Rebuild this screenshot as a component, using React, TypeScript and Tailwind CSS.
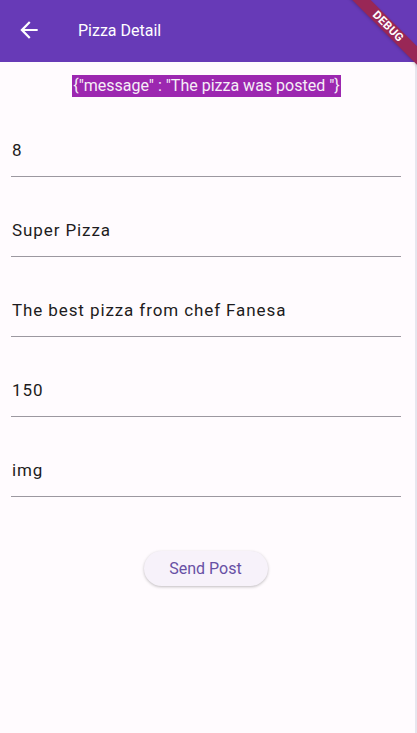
export default function App() {
  const fields = ["8", "Super Pizza", "The best pizza from chef Fanesa", "150", "img"];

  return (
    <div className="relative w-[417px] h-[733px] overflow-hidden bg-[#fffbfe] font-['Roboto',sans-serif]">
      <header className="h-[62px] bg-[#673ab7] flex items-center">
        <svg className="ml-[16px] mt-[-2px]" width="26" height="26" viewBox="0 0 24 24" fill="#ffffff">
          <path d="M20 11H7.83l5.59-5.59L12 4l-8 8 8 8 1.41-1.41L7.83 13H20v-2z" />
        </svg>
        <h1 className="ml-[36px] text-[16px] text-white leading-6">Pizza Detail</h1>
      </header>

      <main className="border-r-2 border-[#e7e6ee] h-[671px]">
        <div className="flex justify-center pt-[13px] pr-[2px]">
          <span className="bg-[#9c27b0] text-[#f6eef7] text-[16px] leading-[22px] px-px">
            {'{"message" : "The pizza was posted "}'}
          </span>
        </div>

        <div className="pl-[11px] pr-[14px]">
          {fields.map((f) => (
            <div key={f} className="h-[80px] flex items-end border-b border-[#9c98a0]">
              <span className="pl-px pb-[14px] text-[17px] leading-6 tracking-[0.9px] text-[#1d1b20]">{f}</span>
            </div>
          ))}
        </div>

        <div className="flex justify-center pt-[54px] pr-[4px]">
          <button className="w-[124px] h-[35px] rounded-full bg-[#f7f2fa] text-[#6750a4] text-[16px] shadow-[0_1px_3px_rgba(0,0,0,0.25)]">
            Send Post
          </button>
        </div>
      </main>

      <div className="absolute left-[328px] top-[20px] w-[120px] h-[13px] rotate-45 bg-[#992756] shadow-[0_1px_3px_rgba(0,0,0,0.2)] flex items-center justify-center">
        <span className="text-white text-[11.5px] font-bold leading-none tracking-[0.3px]">DEBUG</span>
      </div>
    </div>
  );
}
